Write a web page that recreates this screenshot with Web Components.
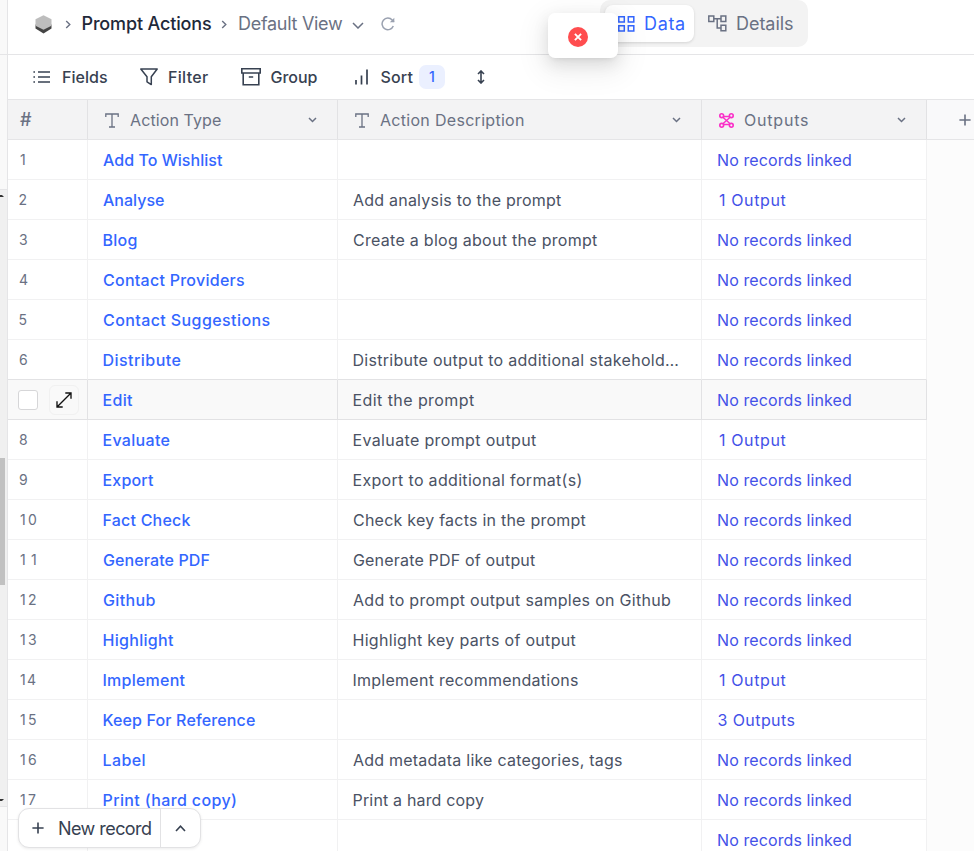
<!DOCTYPE html>
<html lang="en">
<head>
<meta charset="utf-8">
<title>Prompt Actions</title>
<style>
html,body{margin:0;height:100%;overflow:hidden;background:#fff;font-family:Inter,"Noto Sans",sans-serif}
</style>
</head>
<body>
<data-page></data-page>
<script>
const ctx = document.createElement('canvas').getContext('2d');
const define = (name, html, after) => customElements.define(name, class extends HTMLElement {
  connectedCallback() {
    if (this.shadowRoot) return;
    this.attachShadow({mode: 'open'}).innerHTML = typeof html === 'function' ? html(this) : html;
    if (after) after(this);
  }
});

/* A label whose glyphs are tracked evenly to span a given width. */
define('fit-text', el => `<style>:host{display:block;flex:none;white-space:pre;line-height:24px;width:${el.getAttribute('w')}px}
  span{display:block;width:max-content}</style><span>${el.getAttribute('text')}</span>`, el => {
  const s = el.shadowRoot.querySelector('span'), text = s.textContent, w = +el.getAttribute('w');
  const size = el.getAttribute('size') || 16, weight = el.getAttribute('weight') || 400;
  s.style.fontSize = size + 'px';
  s.style.fontWeight = weight;
  ctx.font = `${weight} ${size}px Inter, "Noto Sans", sans-serif`;
  const m = ctx.measureText(text);
  const ink = m.actualBoundingBoxLeft + m.actualBoundingBoxRight;
  if (text.length > 1) s.style.letterSpacing = ((w - ink) / (text.length - 1)).toFixed(3) + 'px';
  s.style.marginLeft = (m.actualBoundingBoxLeft * .5 - .5).toFixed(2) + 'px';
});
const t = (text, w, size = 16, weight = 400) => `<fit-text text="${text}" w="${w}" size="${size}" weight="${weight}"></fit-text>`;

const icons = {
  logo: [17, 19, '<path d="M.5 9.5V13.6L8.5 18.5 16.5 13.6V9.5Z" fill="#444"/><path d="M8.5.2 16.5 4.2V10.8L8.5 14.8.5 10.8V4.2Z" fill="#bdbdbd"/>'],
  right: [6, 9, '<path d="M1.2 1 4.8 4.5 1.2 8" stroke-width="1.4"/>'],
  down: [12, 7, '<path d="M1 1 6 6 11 1" stroke-width="1.5"/>'],
  downs: [9, 6, '<path d="M1 1 4.5 4.5 8 1" stroke-width="1.5"/>'],
  up: [11, 7, '<path d="M1 6 5.5 1.2 10 6" stroke-width="1.6"/>'],
  reload: [14, 14, '<path d="M12.3 9A5.8 5.8 0 1 1 11.2 3L13 4.8" stroke-width="1.5"/><path d="M13.3.8V5.3H8.8Z" fill="currentColor" stroke="none"/>'],
  fields: [18, 14, '<path d="M5 2H17M5 7H17M5 12H17" stroke-width="1.6"/><path d="M.4 2H2M.4 7H2M.4 12H2" stroke-width="1.5"/>'],
  filter: [18, 18, '<path d="M.8 1H17.2L11.3 8.7V16.6L7 13.8V8.7Z" stroke-width="1.5" stroke-linejoin="round"/>'],
  group: [20, 18, '<path d="M.8.8H19.2V5H.8ZM2.2 5V16.8H17.8V5M7.8 9H12.2" stroke-width="1.6"/>'],
  sort: [13, 16, '<path d="M1 11V15.5M6.5 6.5V15.5M12 .5V15.5" stroke-width="1.7"/>'],
  height: [8, 14, '<path d="M4 1.4V12.6M1 4 4 1 7 4M1 10 4 13 7 10" stroke-width="1.6"/>'],
  text: [14, 15, '<path d="M.8 4V1H13.2V4M7 1V14M4 14H10" stroke-width="1.3"/>'],
  link: [15, 15, '<g stroke-width="1.6"><circle cx="2.7" cy="2.7" r="1.9"/><circle cx="12.3" cy="2.7" r="1.9"/><circle cx="2.7" cy="12.3" r="1.9"/><circle cx="12.3" cy="12.3" r="1.9"/><path d="M4.5 3.4H10.5M4.5 11.6H10.5M3.9 4.3 11.1 10.7M11.1 4.3 3.9 10.7" stroke-width="1.5"/></g>'],
  plus: [12, 12, '<path d="M6 .4V11.6M.4 6H11.6" stroke-width="1.6"/>'],
  grid: [17, 16, '<path d="M.8.8H6.3V6H.8ZM10.3.8H15.8V6H10.3ZM.8 9.8H6.3V15H.8ZM10.3 9.8H15.8V15H10.3Z" stroke-width="1.5"/>'],
  tree: [19, 17, '<path d="M.8 1H5.8V6.5H.8ZM13 1H17.8V6.5H13ZM13 10.3H17.8V15.8H13ZM5.8 3.7H13M9.2 3.7V12.9H13" stroke-width="1.5"/>'],
  expand: [16, 16, '<path d="M1 15 15 1M9.3 1H15V6.7M1 9.3V15H6.7" stroke-width="1.35"/>'],
  close: [20, 20, '<circle cx="10" cy="10" r="10" fill="#ff4d4f" stroke="none"/><path d="M6.9 6.9 13.1 13.1M13.1 6.9 6.9 13.1" stroke="#fff" stroke-width="1.9"/>']
};
define('ui-icon', el => {
  const [w, h, body] = icons[el.getAttribute('name')];
  return `<style>:host{display:block;flex:none;width:${w}px;height:${h}px}svg{display:block}</style>
  <svg width="${w}" height="${h}" viewBox="0 0 ${w} ${h}" fill="none" ${el.getAttribute('name') === 'logo' ? '' : 'stroke="currentColor"'}>${body}</svg>`;
});
const i = (name, style = '') => `<ui-icon name="${name}" style="${style}"></ui-icon>`;

define('side-strip', `<style>
:host{display:flex;flex-direction:column;box-sizing:border-box;width:8px;flex:none;background:#f9f9f9;border-right:1px solid #e5e5e7}
.a{height:54px;border-bottom:1px solid #e5e5e7}.b{height:134px;border-bottom:1px solid #e5e5e7}
.c{height:616px;background:#f0f0f0;border-bottom:1px solid #e5e5e7;display:flex;flex-direction:column}
.up,.dn{width:4px;height:2px;background:#333;clip-path:polygon(0 0,50% 0,100% 100%,0 100%)}
.up{margin-top:5px}.dn{margin-top:214px;clip-path:polygon(0 0,100% 0,50% 100%,0 100%)}
.thumb{margin-top:261px;width:5px;height:127px;background:#c1c1c1}
</style><div class="a"></div><div class="b"></div><div class="c"><div class="up"></div><div class="thumb"></div><div class="dn"></div></div>`);

define('view-tabs', `<style>
:host{display:flex;box-sizing:border-box;width:208px;height:47px;padding:5px;background:#f3f3f3;border-radius:10px;color:#6a7183}
div{display:flex;align-items:center;box-sizing:border-box;height:37px}
.on{width:89px;padding-left:13px;gap:10px;background:#fff;border-radius:8px;color:#3366ff;box-shadow:0 1px 3px #0002}
.off{padding-left:14px;gap:10px}
</style><div class="on">${i('grid')}${t('Data', 39, 18)}</div><div class="off">${i('tree')}${t('Details', 56, 18)}</div>`);

define('top-bar', `<style>
:host{display:flex;flex:none;align-items:flex-start;height:54px;border-bottom:1px solid #e5e5e7;color:#6a7183}
.crumbs{display:flex;align-items:center;width:592px;height:48px;padding-left:26.5px;box-sizing:border-box}
.title{color:#1f293a}
</style><div class="crumbs">${i('logo')}${i('right', 'margin:0 12px 0 13px')}<div class="title">${t('Prompt Actions', 128.5, 18, 450)}</div>
${i('right', 'margin:0 12.5px 0 9.5px')}${t('Default View', 104, 18)}${i('down', 'margin:2px 17px 0 9px')}${i('reload', 'color:#9aa1b0')}</div><view-tabs></view-tabs>`);

define('tool-bar', `<style>
:host{display:flex;flex:none;align-items:center;height:44px;border-bottom:1px solid #e5e5e7;padding-left:25px;color:#374151}
.n{display:flex;justify-content:center;align-items:center;width:26px;height:24px;border-radius:7px;background:#ebf0ff;color:#3366ff;margin:0 32px 0 5px}
</style>${i('fields', 'margin-right:12px')}${t('Fields', 44, 16, 450)}${i('filter', 'margin:0 11px 0 33px')}${t('Filter', 39, 16, 450)}
${i('group', 'margin:0 10px 0 33px')}${t('Group', 47, 16, 450)}${i('sort', 'margin:0 13px 0 37px')}${t('Sort', 33, 16, 450)}<div class="n">${t('1', 5, 14, 500)}</div>${i('height')}`);

const grid = 'display:grid;grid-template-columns:80px 250px 364px 225px 1fr;';
define('grid-head', `<style>
:host{${grid}flex:none;height:39px;border-bottom:1px solid #e5e5e7;background:#f3f3f4;color:#6a7183}
div{display:flex;align-items:center;border-right:1px solid #e2e2e4;padding:1px 0 0 16.5px}
.n{padding-left:12.5px}div ui-icon:last-child{margin-left:auto}
.add{background:#f9f9fa;border:0;padding-left:32px;color:#6a7183}div.add ui-icon{margin:0}
</style><div class="n">${t('#', 13, 18, 500)}</div>
<div>${i('text', 'margin-right:12px')}${t('Action Type', 91)}${i('downs', 'margin-right:20px')}</div>
<div>${i('text', 'margin-right:12px')}${t('Action Description', 144)}${i('downs', 'margin-right:20px')}</div>
<div>${i('link', 'color:#fa30c8;margin-right:11px')}${t('Outputs', 64)}${i('downs', 'margin-right:20px;')}</div>
<div class="add">${i('plus')}</div>`);

define('row-tools', `<style>
:host{display:flex;align-items:center;margin-left:-1.5px;color:#111}
.box{width:18px;height:18px;border:1px solid #d6d6d8;border-radius:3px;background:#fff;margin-right:11px}
.ex{display:flex;align-items:center;justify-content:center;width:30px;height:30px;border:1px solid #f1f1f1;border-radius:6px;box-sizing:border-box}
</style><div class="box"></div><div class="ex">${i('expand')}</div>`);

define('grid-row', el => {
  const [n, name, nw, desc, dw, out] = JSON.parse(el.dataset.row);
  const lw = out === '1 Output' ? 66.5 : out === '3 Outputs' ? 77 : 133;
  const num = n === 'tools' ? '<row-tools></row-tools>' : n ? t(n, n > 9 ? 16 : n == 1 ? 4.5 : 8, 14) : '';
  const line = n === 'tools' ? '#e2e2e4' : '#f1f1f2';
  return `<style>
:host{${grid}flex:none;height:40px}
div{display:flex;align-items:center;box-sizing:border-box;min-width:0;height:40px;padding:1px 0 0 15.5px;border-right:1px solid ${line};border-bottom:1px solid ${n === 'tools' || n === '6' ? '#e2e2e4' : '#f1f1f2'};background:${n === 'tools' ? '#f9f9f9' : '#fff'}}
.n{padding-left:${n === 'tools' ? 11.5 : n > 9 || n == 1 ? 12.5 : 11.5}px;color:#6a7183}.a{color:#3366ff}.d{color:#4a5264}.o{color:#4351e8;padding-left:${out[0] === '1' ? 17.5 : 16}px}
.r{background:#fcfcfc;border:0}
</style><div class="n">${num}</div><div class="a">${name ? t(name, nw, 16, 500) : ''}</div><div class="d">${desc ? t(desc, dw) : ''}</div><div class="o">${t(out, lw)}</div><div class="r"></div>`;
});

define('new-record', `<style>
:host{position:absolute;left:18px;top:808px;display:flex;box-sizing:border-box;width:183px;height:40px;border:1px solid #e2e2e4;border-radius:11px;background:#fff;color:#374151;box-shadow:0 1px 3px #00000014}
.m{display:flex;align-items:center;padding:2px 0 0 13px;width:128px;border-right:1px solid #e2e2e4}
.u{display:flex;flex:1;align-items:center;justify-content:center}
</style><div class="m">${i('plus', 'margin:-3px 15px 0 0')}${t('New record', 92, 18)}</div><div class="u">${i('up')}</div>`);

define('toast-box', `<style>
:host{position:absolute;left:548px;top:13px;display:flex;align-items:center;box-sizing:border-box;width:70px;height:45px;padding:3px 0 0 20px;border-radius:7px;background:#fff;box-shadow:0 6px 16px rgba(0,0,0,.1),0 3px 6px -4px rgba(0,0,0,.14),0 9px 28px 8px rgba(0,0,0,.06)}
</style>${i('close')}`);

const none = 'No records linked';
const rows = [
  ['1', 'Add To Wishlist', 120, '', 0, none],
  ['2', 'Analyse', 61, 'Add analysis to the prompt', 208, '1 Output'],
  ['3', 'Blog', 33, 'Create a blog about the prompt', 244, none],
  ['4', 'Contact Providers', 141, '', 0, none],
  ['5', 'Contact Suggestions', 166.5, '', 0, none],
  ['6', 'Distribute', 77, 'Distribute output to additional stakehold…', 324.5, none],
  ['tools', 'Edit', 29.5, 'Edit the prompt', 120.5, none],
  ['8', 'Evaluate', 66, 'Evaluate prompt output', 182.5, '1 Output'],
  ['9', 'Export', 50.5, 'Export to additional format(s)', 228, none],
  ['10', 'Fact Check', 87, 'Check key facts in the prompt', 232.5, none],
  ['11', 'Generate PDF', 106.5, 'Generate PDF of output', 182, none],
  ['12', 'Github', 52.5, 'Add to prompt output samples on Github', 317, none],
  ['13', 'Highlight', 70.5, 'Highlight key parts of output', 222, none],
  ['14', 'Implement', 82, 'Implement recommendations', 224.5, '1 Output'],
  ['15', 'Keep For Reference', 151.5, '', 0, '3 Outputs'],
  ['16', 'Label', 41, 'Add metadata like categories, tags', 269, none],
  ['17', 'Print (hard copy)', 132.5, 'Print a hard copy', 130.5, none],
  ['', '', 0, '', 0, none]
];
define('data-page', `<style>
:host{display:flex;position:relative;width:974px;height:851px;overflow:hidden}
main{display:flex;flex-direction:column;flex:1;min-width:0}
</style><side-strip></side-strip><main><top-bar></top-bar><tool-bar></tool-bar><grid-head></grid-head>
${rows.map(r => `<grid-row data-row='${JSON.stringify(r)}'></grid-row>`).join('')}</main><new-record></new-record><toast-box></toast-box>`);
</script>
</body>
</html>
